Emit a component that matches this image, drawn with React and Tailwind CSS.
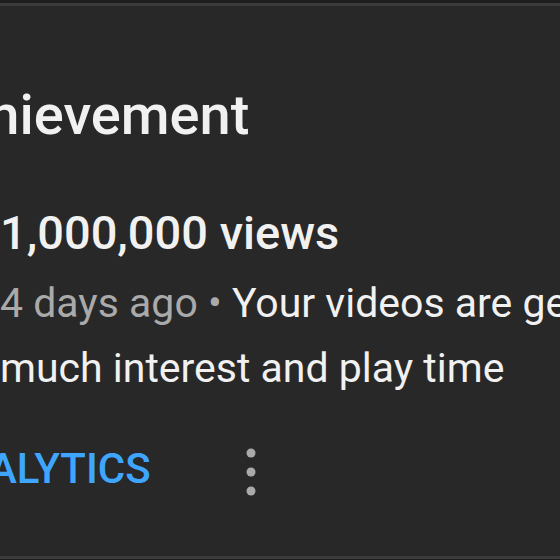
export default function App() {
    return (
        <div
            className="flex h-[560px] w-[560px] flex-col overflow-hidden bg-[#282828] text-[#f1f1f1]"
            style={{ fontFamily: 'Roboto, "Noto Sans", sans-serif' }}
        >
            <div className="h-[3px] shrink-0 bg-[#1e1e1e]" />
            <div className="h-[3px] shrink-0 bg-[#3b3b3b]" />

            <div className="flex flex-1 flex-col overflow-hidden">
                <h2 className="-ml-[78px] mt-[81px] whitespace-nowrap text-[56px] font-medium leading-none">
                    Achievement
                </h2>

                <div className="mt-[66px] flex flex-col">
                    <p className="whitespace-nowrap text-[47px] font-medium leading-none">1,000,000 views</p>
                    <p className="mt-[15px] text-[41px] leading-[65px]">
                        <span className="block whitespace-nowrap">
                            <span className="text-[#aaaaaa]">4 days ago</span>
                            <span className="text-[#aaaaaa]"> • </span>
                            Your videos are getting so
                        </span>
                        <span className="block whitespace-nowrap">much interest and play time</span>
                    </p>
                </div>

                <div className="mt-[38px] flex items-center">
                    <span className="-ml-[69px] whitespace-nowrap text-[42px] font-medium leading-none text-[#3ea6ff]">
                        ANALYTICS
                    </span>
                    <svg className="ml-[90px]" width="20" height="60" viewBox="0 0 20 60" fill="#aaaaaa">
                        <circle cx="10" cy="14" r="4.5" />
                        <circle cx="10" cy="33" r="4.5" />
                        <circle cx="10" cy="52" r="4.5" />
                    </svg>
                </div>
            </div>

            <div className="h-[3px] shrink-0 bg-[#3b3b3b]" />
            <div className="h-[1px] shrink-0 bg-[#1e1e1e]" />
        </div>
    );
}
